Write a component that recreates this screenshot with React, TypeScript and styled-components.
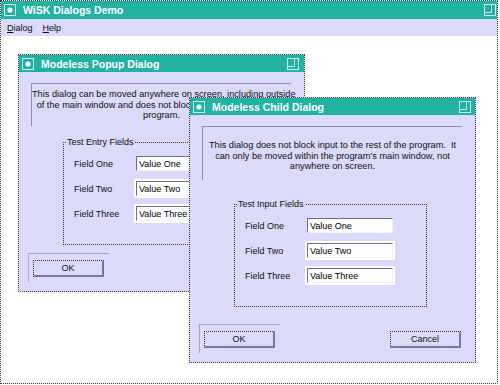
import styled, { createGlobalStyle } from 'styled-components';

const TEAL = '#22b2a2';
const LAVENDER = '#dadafa';
const EDGE = '#3c3c48';

const GlobalStyle = createGlobalStyle`
  html, body {
    margin: 0;
    padding: 0;
    background: #fff;
  }
  body {
    font-family: "Liberation Sans", Arial, sans-serif;
    color: #111;
  }
`;

const MainWindow = styled.div`
  position: relative;
  width: 498px;
  height: 384px;
  box-sizing: border-box;
  border: 1px dotted ${EDGE};
  display: flex;
  flex-direction: column;
  background: #fff;
  overflow: hidden;
`;

const TitleBar = styled.div<{ $height: number; $padRight: number }>`
  flex-shrink: 0;
  height: ${(p) => p.$height}px;
  display: flex;
  align-items: center;
  gap: 7px;
  padding: 0 ${(p) => p.$padRight}px 0 3px;
  background: ${TEAL};
`;

const TitleText = styled.span`
  flex: 1;
  font-size: 10.5px;
  font-weight: bold;
  color: #fff;
  white-space: nowrap;
`;

const MenuBar = styled.div`
  flex-shrink: 0;
  height: 17px;
  display: flex;
  align-items: center;
  gap: 10px;
  padding-left: 6px;
  background: ${LAVENDER};
  font-size: 9px;
`;

const MenuItem = styled.span`
  color: #111;
  u {
    text-decoration-thickness: 1px;
    text-underline-offset: 1px;
  }
`;

const Client = styled.div`
  flex: 1;
  background: #fff;
`;

const Dialog = styled.div<{ $left: number; $top: number; $height: number }>`
  position: absolute;
  left: ${(p) => p.$left}px;
  top: ${(p) => p.$top}px;
  width: 287px;
  height: ${(p) => p.$height}px;
  box-sizing: border-box;
  border: 1px dotted ${EDGE};
  background: ${LAVENDER};
  display: flex;
  flex-direction: column;
`;

const Content = styled.div`
  flex: 1;
  display: flex;
  flex-direction: column;
  padding: 11px 13px 0 12px;
`;

// sunken-ish message area: only the top and left edges show
const MessagePanel = styled.div<{ $height: number; $padTop: number }>`
  height: ${(p) => p.$height}px;
  box-sizing: border-box;
  padding-top: ${(p) => p.$padTop}px;
  border-top: 1px solid #8c8cb0;
  border-left: 1px solid #8c8cb0;
  text-align: center;
  font-size: 9.2px;
  line-height: 10.5px;
  white-space: nowrap;
`;

const Group = styled.div<{ $gap: number }>`
  position: relative;
  margin: ${(p) => p.$gap}px 0 0 32px;
  width: 193px;
  height: 103px;
  box-sizing: border-box;
  border: 1px dotted ${EDGE};
  padding-top: 12px;
  display: flex;
  flex-direction: column;
  gap: 8px;
`;

const Legend = styled.span`
  position: absolute;
  top: -6px;
  left: 2px;
  padding: 0 1px;
  background: ${LAVENDER};
  font-size: 9px;
  line-height: 11px;
  white-space: nowrap;
`;

const FieldRow = styled.div`
  height: 17px;
  display: flex;
  align-items: center;
`;

const FieldLabel = styled.span`
  width: 72px;
  box-sizing: border-box;
  padding-left: 10px;
  flex-shrink: 0;
  font-size: 9px;
  white-space: nowrap;
`;

const TextInput = styled.input<{ $framed?: boolean }>`
  flex-shrink: 0;
  width: 86px;
  height: 15px;
  box-sizing: border-box;
  margin: 0;
  padding: 0 2px;
  border-top: 1px solid #6e6e7c;
  border-left: 1px solid #6e6e7c;
  border-right: 1px solid #f4f4f4;
  border-bottom: 1px solid #f4f4f4;
  background: #fff;
  color: #000;
  font-family: "Liberation Sans", Arial, sans-serif;
  font-size: 9px;
  outline: none;
  box-shadow: ${(p) => (p.$framed ? '0 0 0 2px #fff' : 'none')};
`;

const Footer = styled.div`
  display: flex;
  justify-content: space-between;
  align-items: flex-end;
  padding: 0 14px 9px 9px;
`;

const DefaultFrame = styled.div`
  padding: 3px 5px 5px 4px;
  border-top: 1px solid #a6a6c6;
  border-left: 1px solid #a6a6c6;
`;

const Button = styled.button<{ $plain?: boolean }>`
  width: 71px;
  height: 17px;
  box-sizing: border-box;
  margin: 0 0 ${(p) => (p.$plain ? 5 : 0)}px 0;
  padding: 0;
  border-top: 1px dotted #2c2c34;
  border-left: 1px dotted #2c2c34;
  border-right: 2px solid #7676a2;
  border-bottom: 2px solid #7676a2;
  background: ${LAVENDER};
  color: #111;
  font-family: "Liberation Sans", Arial, sans-serif;
  font-size: 9px;
  line-height: 12px;
`;

function WindowIcon() {
  return (
    <svg width="12" height="12" viewBox="0 0 12 12">
      <rect x="0.5" y="0.5" width="11" height="11" fill="none" stroke="#c6f2ec" />
      <circle cx="6" cy="6" r="2.6" fill="#fff" />
    </svg>
  );
}

function MaximizeIcon() {
  return (
    <svg width="12" height="12" viewBox="0 0 12 12">
      <rect x="0.5" y="0.5" width="11" height="11" fill="none" stroke="#c6f2ec" />
      <path d="M0.5 8.5 H7.5 V0.5" fill="none" stroke="#c6f2ec" />
    </svg>
  );
}

type Field = { label: string; value: string; framed?: boolean };

const fields: Field[] = [
  { label: 'Field One', value: 'Value One' },
  { label: 'Field Two', value: 'Value Two', framed: true },
  { label: 'Field Three', value: 'Value Three', framed: true },
];

function FieldGroup({ title, gap }: { title: string; gap: number }) {
  return (
    <Group $gap={gap}>
      <Legend>{title}</Legend>
      {fields.map((f) => (
        <FieldRow key={f.label}>
          <FieldLabel>{f.label}</FieldLabel>
          <TextInput $framed={f.framed} defaultValue={f.value} readOnly />
        </FieldRow>
      ))}
    </Group>
  );
}

export default function App() {
  return (
    <>
      <GlobalStyle />
      <MainWindow>
        <TitleBar $height={18} $padRight={1}>
          <WindowIcon />
          <TitleText>WiSK Dialogs Demo</TitleText>
          <MaximizeIcon />
        </TitleBar>
        <MenuBar>
          <MenuItem>
            <u>D</u>ialog
          </MenuItem>
          <MenuItem>
            <u>H</u>elp
          </MenuItem>
        </MenuBar>
        <Client />

        {/* modeless popup, can go anywhere */}
        <Dialog $left={17} $top={53} $height={238}>
          <TitleBar $height={17} $padRight={5}>
            <WindowIcon />
            <TitleText>Modeless Popup Dialog</TitleText>
            <MaximizeIcon />
          </TitleBar>
          <Content>
            <MessagePanel $height={43} $padTop={5}>
              This dialog can be moved anywhere on screen, including outside
              <br />
              of the main window and does not block input to the rest of the
              <br />
              program.
            </MessagePanel>
            <FieldGroup title="Test Entry Fields" gap={16} />
          </Content>
          <Footer>
            <DefaultFrame>
              <Button>OK</Button>
            </DefaultFrame>
          </Footer>
        </Dialog>

        {/* child dialog, stays inside main window */}
        <Dialog $left={188} $top={96} $height={266}>
          <TitleBar $height={17} $padRight={4}>
            <WindowIcon />
            <TitleText>Modeless Child Dialog</TitleText>
            <MaximizeIcon />
          </TitleBar>
          <Content>
            <MessagePanel $height={54} $padTop={13}>
              This dialog does not block input to the rest of the program.&nbsp; It
              <br />
              can only be moved within the program’s main window, not
              <br />
              anywhere on screen.
            </MessagePanel>
            <FieldGroup title="Test Input Fields" gap={24} />
          </Content>
          <Footer>
            <DefaultFrame>
              <Button>OK</Button>
            </DefaultFrame>
            <Button $plain>Cancel</Button>
          </Footer>
        </Dialog>
      </MainWindow>
    </>
  );
}
